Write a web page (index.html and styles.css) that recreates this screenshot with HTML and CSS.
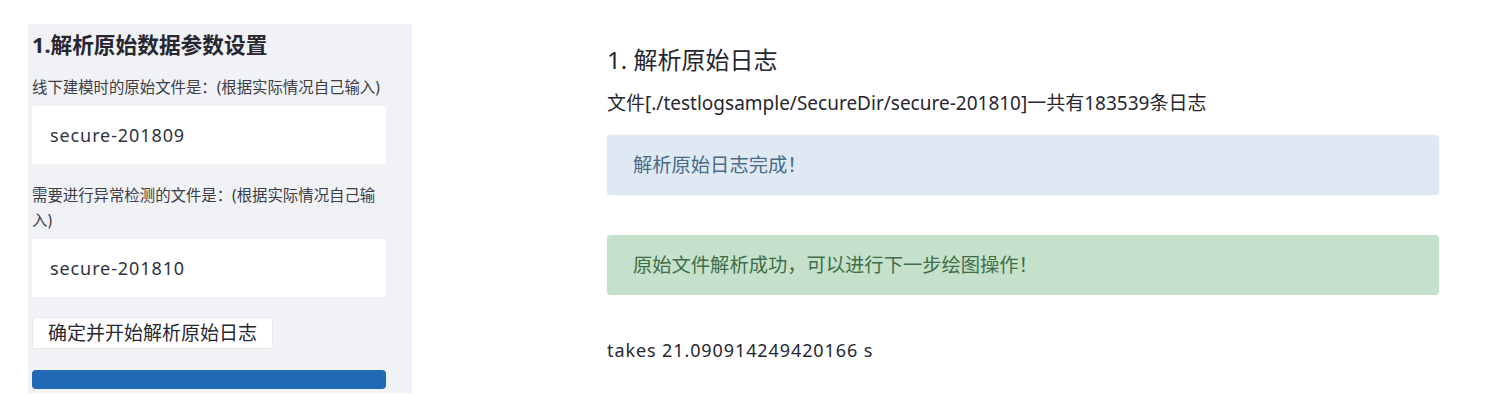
FILE: index.html
```html
<!DOCTYPE html>
<html lang="zh-CN">
<head>
    <meta charset="UTF-8">
    <title>解析原始日志</title>
    <link rel="stylesheet" href="styles.css">
</head>
<body>
    <div class="page">
        <!-- Sidebar: parameters -->
        <aside class="sidebar">
            <h3 class="side-title">1.解析原始数据参数设置</h3>

            <label class="field-label">线下建模时的原始文件是：(根据实际情况自己输入)</label>
            <div class="text-input">secure-201809</div>

            <label class="field-label second">需要进行异常检测的文件是：(根据实际情况自己输入)</label>
            <div class="text-input">secure-201810</div>

            <button class="run-btn">确定并开始解析原始日志</button>

            <div class="progress-bar"></div>
        </aside>

        <!-- Main output -->
        <main class="content">
            <h2 class="main-title">1. 解析原始日志</h2>
            <p class="log-line">文件[./testlogsample/SecureDir/secure-201810]一共有183539条日志</p>

            <div class="alert alert-info">解析原始日志完成！</div>
            <div class="alert alert-success">原始文件解析成功，可以进行下一步绘图操作！</div>

            <p class="timing">takes 21.090914249420166 s</p>
        </main>
    </div>
</body>
</html>
```
FILE: styles.css
```css
/* Basic styling */
body {
    margin: 0;
    background: #ffffff;
    font-family: "Noto Sans", "Noto Sans CJK SC", sans-serif;
    color: #262730;
}

.page {
    display: flex;
    align-items: flex-start;
    padding: 24px 0 0 28px;
}

/* Sidebar */
.sidebar {
    width: 384px;
    height: 369px;
    box-sizing: border-box;
    padding: 7px 26px 0 4px;
    background: #f0f2f6;
    display: flex;
    flex-direction: column;
    align-items: flex-start;
}

.side-title {
    margin: 0;
    font-size: 21.7px;
    line-height: 28px;
    font-weight: 700;
    color: #262730;
}

.field-label {
    display: block;
    margin-top: 16px;
    font-size: 15.4px;
    line-height: 25px;
    color: #3c3d45;
}

.field-label.second {
    margin-top: 19px;
}

.text-input {
    align-self: stretch;
    height: 58px;
    margin-top: 6px;
    padding-left: 18px;
    background: #ffffff;
    border-radius: 3px;
    font-size: 18px;
    line-height: 58px;
    letter-spacing: 0.9px;
    color: #31333f;
}

.run-btn {
    margin-top: 20px;
    height: 32px;
    padding: 0 15px;
    background: #ffffff;
    border: 1px solid #e6e7ea;
    border-radius: 3px;
    font-family: inherit;
    font-size: 19px;
    line-height: 30px;
    color: #262730;
}

.progress-bar {
    align-self: stretch;
    height: 19px;
    margin-top: 21px;
    background: #1f69b5;
    border-radius: 4px;
}

/* Main content */
.content {
    width: 832px;
    margin-left: 195px;
    padding-top: 20px;
}

.main-title {
    margin: 0;
    font-size: 24px;
    line-height: 32px;
    font-weight: 400;
    color: #262730;
}

.log-line {
    margin: 15px 0 0;
    font-size: 19px;
    line-height: 24px;
    color: #262730;
}

.alert {
    height: 60px;
    box-sizing: border-box;
    padding-left: 26px;
    border-radius: 4px;
    font-size: 19.3px;
    line-height: 60px;
    box-shadow: 0 0 2px rgba(0, 0, 0, 0.08);
}

.alert-info {
    margin-top: 20px;
    background: #dee9f3;
    color: #4b6a86;
}

.alert-success {
    margin-top: 40px;
    background: #c5e1cb;
    color: #3f6e48;
}

.timing {
    margin: 43px 0 0;
    font-size: 18px;
    line-height: 24px;
    letter-spacing: 0.9px;
    color: #262730;
}
```
